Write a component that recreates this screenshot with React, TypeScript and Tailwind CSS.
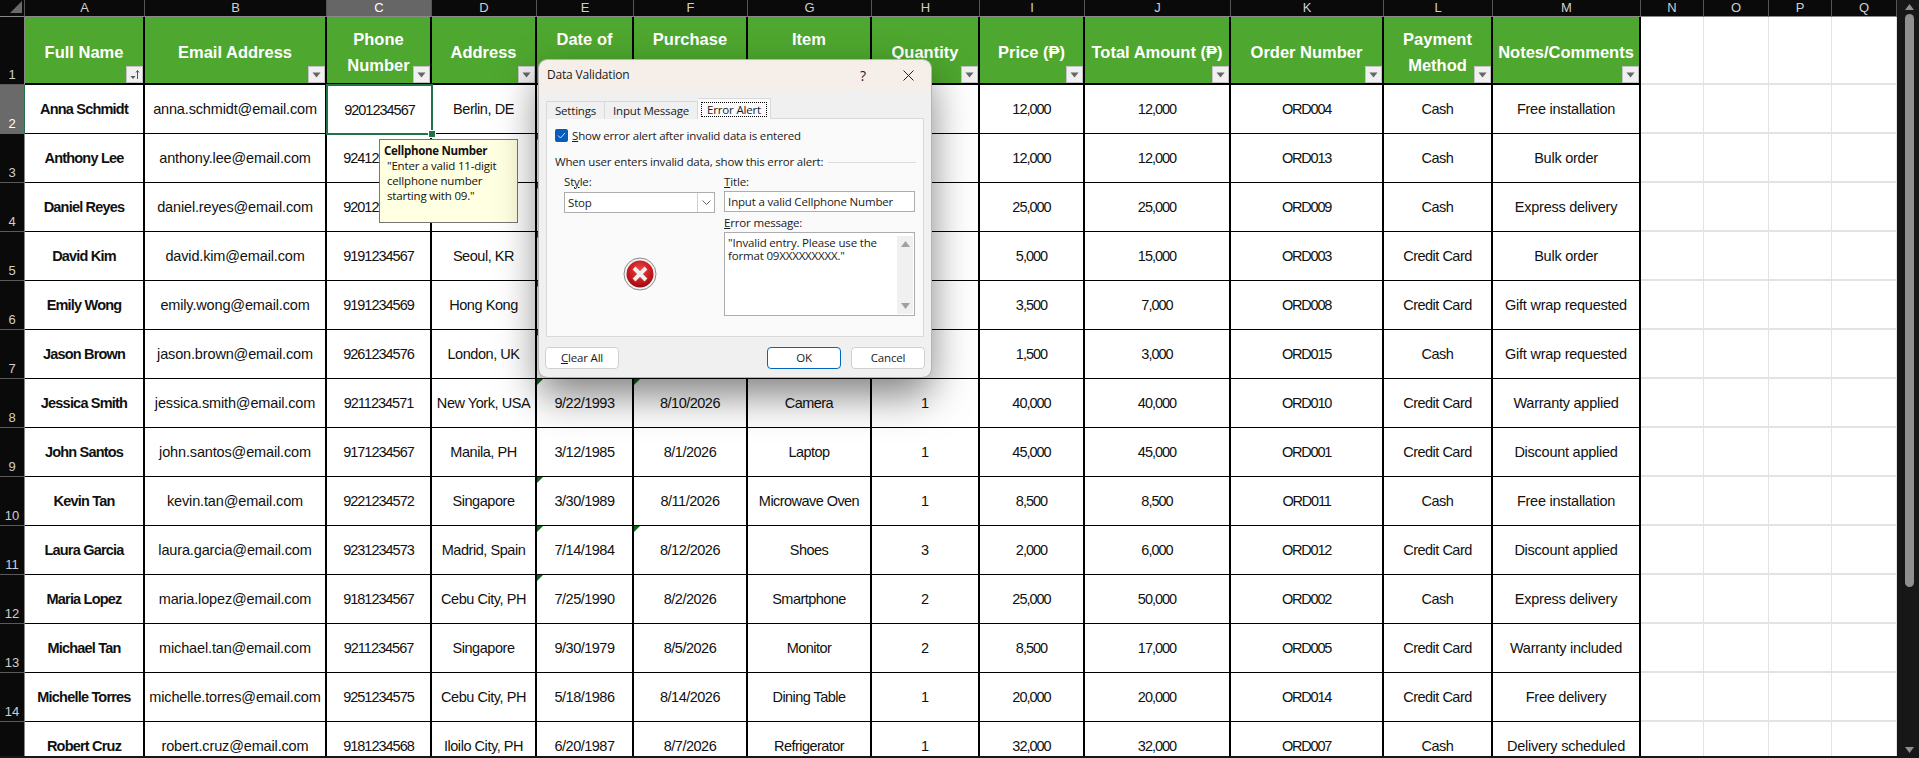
import React from 'react';

type Row = {
    num: number;
    name: string;
    email: string;
    phone: string;
    address: string;
    dob: string;
    purchase: string;
    item: string;
    qty: string;
    price: string;
    total: string;
    order: string;
    payment: string;
    notes: string;
    flagDob?: boolean;
    flagPurchase?: boolean;
};

const rows: Row[] = [
    {num: 2, name: 'Anna Schmidt', email: 'anna.schmidt@email.com', phone: '9201234567', address: 'Berlin, DE', dob: '', purchase: '', item: '', qty: '', price: '12,000', total: '12,000', order: 'ORD004', payment: 'Cash', notes: 'Free installation'},
    {num: 3, name: 'Anthony Lee', email: 'anthony.lee@email.com', phone: '9241234567', address: '', dob: '', purchase: '', item: '', qty: '', price: '12,000', total: '12,000', order: 'ORD013', payment: 'Cash', notes: 'Bulk order', flagDob: true},
    {num: 4, name: 'Daniel Reyes', email: 'daniel.reyes@email.com', phone: '9201234567', address: '', dob: '', purchase: '', item: '', qty: '', price: '25,000', total: '25,000', order: 'ORD009', payment: 'Cash', notes: 'Express delivery', flagDob: true},
    {num: 5, name: 'David Kim', email: 'david.kim@email.com', phone: '9191234567', address: 'Seoul, KR', dob: '', purchase: '', item: '', qty: '', price: '5,000', total: '15,000', order: 'ORD003', payment: 'Credit Card', notes: 'Bulk order', flagDob: true},
    {num: 6, name: 'Emily Wong', email: 'emily.wong@email.com', phone: '9191234569', address: 'Hong Kong', dob: '', purchase: '', item: '', qty: '', price: '3,500', total: '7,000', order: 'ORD008', payment: 'Credit Card', notes: 'Gift wrap requested', flagDob: true},
    {num: 7, name: 'Jason Brown', email: 'jason.brown@email.com', phone: '9261234576', address: 'London, UK', dob: '', purchase: '', item: '', qty: '', price: '1,500', total: '3,000', order: 'ORD015', payment: 'Cash', notes: 'Gift wrap requested', flagDob: true},
    {num: 8, name: 'Jessica Smith', email: 'jessica.smith@email.com', phone: '9211234571', address: 'New York, USA', dob: '9/22/1993', purchase: '8/10/2026', item: 'Camera', qty: '1', price: '40,000', total: '40,000', order: 'ORD010', payment: 'Credit Card', notes: 'Warranty applied', flagDob: true, flagPurchase: true},
    {num: 9, name: 'John Santos', email: 'john.santos@email.com', phone: '9171234567', address: 'Manila, PH', dob: '3/12/1985', purchase: '8/1/2026', item: 'Laptop', qty: '1', price: '45,000', total: '45,000', order: 'ORD001', payment: 'Credit Card', notes: 'Discount applied'},
    {num: 10, name: 'Kevin Tan', email: 'kevin.tan@email.com', phone: '9221234572', address: 'Singapore', dob: '3/30/1989', purchase: '8/11/2026', item: 'Microwave Oven', qty: '1', price: '8,500', total: '8,500', order: 'ORD011', payment: 'Cash', notes: 'Free installation', flagDob: true},
    {num: 11, name: 'Laura Garcia', email: 'laura.garcia@email.com', phone: '9231234573', address: 'Madrid, Spain', dob: '7/14/1984', purchase: '8/12/2026', item: 'Shoes', qty: '3', price: '2,000', total: '6,000', order: 'ORD012', payment: 'Credit Card', notes: 'Discount applied', flagDob: true, flagPurchase: true},
    {num: 12, name: 'Maria Lopez', email: 'maria.lopez@email.com', phone: '9181234567', address: 'Cebu City, PH', dob: '7/25/1990', purchase: '8/2/2026', item: 'Smartphone', qty: '2', price: '25,000', total: '50,000', order: 'ORD002', payment: 'Cash', notes: 'Express delivery', flagDob: true},
    {num: 13, name: 'Michael Tan', email: 'michael.tan@email.com', phone: '9211234567', address: 'Singapore', dob: '9/30/1979', purchase: '8/5/2026', item: 'Monitor', qty: '2', price: '8,500', total: '17,000', order: 'ORD005', payment: 'Credit Card', notes: 'Warranty included'},
    {num: 14, name: 'Michelle Torres', email: 'michelle.torres@email.com', phone: '9251234575', address: 'Cebu City, PH', dob: '5/18/1986', purchase: '8/14/2026', item: 'Dining Table', qty: '1', price: '20,000', total: '20,000', order: 'ORD014', payment: 'Credit Card', notes: 'Free delivery'},
    {num: 15, name: 'Robert Cruz', email: 'robert.cruz@email.com', phone: '9181234568', address: 'Iloilo City, PH', dob: '6/20/1987', purchase: '8/7/2026', item: 'Refrigerator', qty: '1', price: '32,000', total: '32,000', order: 'ORD007', payment: 'Cash', notes: 'Delivery scheduled'},
];

const letters = ['A', 'B', 'C', 'D', 'E', 'F', 'G', 'H', 'I', 'J', 'K', 'L', 'M', 'N', 'O', 'P', 'Q'];

const headers = [
    ['Full Name'],
    ['Email Address'],
    ['Phone', 'Number'],
    ['Address'],
    ['Date of', 'Birth'],
    ['Purchase', 'Date'],
    ['Item', 'Purchased'],
    ['Quantity'],
    ['Price (₱)'],
    ['Total Amount (₱)'],
    ['Order Number'],
    ['Payment', 'Method'],
    ['Notes/Comments'],
];

const gridCols = 'grid grid-cols-[25px_120px_182px_105px_105px_97px_114px_124px_108px_105px_146px_153px_109px_148px_63px_65px_63px_65px]';

const FilterButton = ({sorted}: {sorted?: boolean}) => (
    <div className="absolute right-0 bottom-0 w-[17px] h-[17px] bg-[#f0f0f0] border border-[#c4c4c4] flex items-center justify-center">
        {sorted ? (
            <svg width="15" height="15" viewBox="0 0 15 15">
                <path d="M3.500 9h5L6 12z" fill="#555"/>
                <path d="M10.500 12V3.500M9 5.500l1.500-2 1.500 2" stroke="#555" fill="none"/>
            </svg>
        ) : (
            <svg width="9" height="6" viewBox="0 0 9 6">
                <path d="M0.500 0.500h8L4.500 5.500z" fill="#666"/>
            </svg>
        )}
    </div>
);

const Cell = ({text, fit, flag}: {text: string; fit?: string; flag?: boolean}) => (
    <div className={`relative h-[49px] flex items-center justify-center pt-[2px] bg-white border-r-2 border-b border-black text-[14.5px] whitespace-nowrap overflow-hidden text-[#111] ${fit ?? ''}`}>
        {flag && <div className="absolute left-0 top-0 w-0 h-0 border-t-[6px] border-r-[6px] border-t-[#0a6b14] border-r-transparent"/>}
        {text}
    </div>
);

const EmptyCell = () => <div className="h-[49px] bg-white border-r border-b-2 border-[#e3e3e3]"/>;

const RowHeader = ({num, active, hideLabel}: {num: number; active?: boolean; hideLabel?: boolean}) => (
    <div className={`h-[49px] flex items-end justify-center pb-[1px] text-[13px] leading-[16px] border-b ${active ? 'bg-[#6a6a6a] text-white border-[#6a6a6a] border-r border-r-[#217346]' : 'bg-[#0a0a0a] text-[#cfcfcf] border-[#5a5a5a] border-r border-r-[#888]'}`}>
        {!hideLabel && num}
    </div>
);

const Sheet = () => (
    <div className={`${gridCols} content-start overflow-hidden h-[756px] bg-white`}>
        {/* column letters */}
        <div className="h-[17px] bg-[#0a0a0a] border-b border-r border-b-[#888] border-r-[#555] relative overflow-hidden">
            <div className="absolute right-[2px] bottom-[3px] w-0 h-0 border-b-[12px] border-l-[12px] border-b-[#6a6a6a] border-l-transparent"/>
        </div>
        {letters.map(letter => (
            <div key={letter} className={`h-[17px] flex items-center justify-center text-[13px] border-r border-b border-r-[#555] border-b-[#888] ${letter === 'C' ? 'bg-[#666] text-white' : 'bg-[#0a0a0a] text-[#cfcfcf]'}`}>
                {letter}
            </div>
        ))}

        {/* header row */}
        <div className="h-[68px] bg-[#0a0a0a] flex items-end justify-center text-[13px] leading-[16px] pb-[1px] text-[#cfcfcf] border-b border-r border-b-[#5a5a5a] border-r-[#888]">1</div>
        {headers.map((lines, i) => (
            <div key={i} className="relative h-[68px] bg-[#4ea72e] border-r-2 border-b-2 border-black flex flex-col items-center justify-center pt-[3px] text-white font-bold text-[16.5px] leading-[26px] whitespace-nowrap">
                {lines.map(line => <span key={line}>{line}</span>)}
                <FilterButton sorted={i === 0}/>
            </div>
        ))}
        <div className="h-[68px] bg-white border-r border-b-2 border-[#e3e3e3]"/>
        <div className="h-[68px] bg-white border-r border-b-2 border-[#e3e3e3]"/>
        <div className="h-[68px] bg-white border-r border-b-2 border-[#e3e3e3]"/>
        <div className="h-[68px] bg-white border-r border-b-2 border-[#e3e3e3]"/>

        {rows.map((row, rowIndex) => (
            <React.Fragment key={row.num}>
                <RowHeader num={row.num} active={rowIndex === 0} hideLabel={row.num === 15}/>
                <Cell text={row.name} fit="font-bold tracking-[-0.8px]"/>
                <Cell text={row.email} fit="tracking-[-0.15px]"/>
                {rowIndex === 0 ? (
                    <div className="relative z-10 h-[49px] flex items-center justify-center pt-[2px] bg-white text-[14.5px] tracking-[-1px] text-[#111] outline-2 -outline-offset-1 outline-[#217346]">
                        {row.phone}
                        <div className="absolute right-[-3px] bottom-[-3px] w-[6px] h-[6px] bg-[#217346] outline outline-white"/>
                    </div>
                ) : (
                    <Cell text={row.phone} fit="tracking-[-1px]"/>
                )}
                <Cell text={row.address} fit="tracking-[-0.45px]"/>
                <Cell text={row.dob} fit="tracking-[-0.5px]" flag={row.flagDob}/>
                <Cell text={row.purchase} fit="tracking-[-0.5px]" flag={row.flagPurchase}/>
                <Cell text={row.item} fit="tracking-[-0.55px]"/>
                <Cell text={row.qty}/>
                <Cell text={row.price} fit="tracking-[-1px]"/>
                <Cell text={row.total} fit="tracking-[-1px]"/>
                <Cell text={row.order} fit="tracking-[-1.2px]"/>
                <Cell text={row.payment} fit="tracking-[-0.5px]"/>
                <Cell text={row.notes} fit="tracking-[-0.25px]"/>
                <EmptyCell/>
                <EmptyCell/>
                <EmptyCell/>
                <EmptyCell/>
            </React.Fragment>
        ))}
    </div>
);

const ScrollBar = () => (
    <div className="relative flex-1 bg-[#171717] flex flex-col items-center pt-[14px] pl-[2px]">
        <svg className="absolute top-[4px]" width="9" height="6" viewBox="0 0 9 6">
            <path d="M4.500 0L9 6H0z" fill="#8f8f8f"/>
        </svg>
        <div className="w-[9px] h-[573px] rounded-full bg-[#8f8f8f]"/>
        <svg className="absolute bottom-[5px]" width="9" height="6" viewBox="0 0 9 6">
            <path d="M0 0h9L4.500 6z" fill="#8f8f8f"/>
        </svg>
    </div>
);

const InputTooltip = () => (
    <div className="absolute left-[379px] top-[139px] w-[139px] h-[84px] bg-[#ffffe1] border border-[#767676] px-[4px] pt-[3px] font-['Open_Sans',sans-serif] text-[11.5px] tracking-[-0.18px] leading-[15px] text-[#111] z-20">
        <div className="font-bold tracking-[-0.3px]">Cellphone Number</div>
        <div className="pl-[3px]">"Enter a valid 11-digit</div>
        <div className="pl-[3px]">cellphone number</div>
        <div className="pl-[3px]">starting with 09."</div>
    </div>
);

const ErrorIcon = () => (
    <svg width="34" height="34" viewBox="0 0 34 34">
        <defs>
            <radialGradient id="stop-red" cx="50%" cy="35%" r="65%">
                <stop offset="0%" stopColor="#e8474a"/>
                <stop offset="70%" stopColor="#c5161c"/>
                <stop offset="100%" stopColor="#8e0d12"/>
            </radialGradient>
        </defs>
        <circle cx="17" cy="17" r="16" fill="#f4f4f4" stroke="#8a8a8a"/>
        <circle cx="17" cy="17" r="13.500" fill="url(#stop-red)"/>
        <path d="M11 11l12 12M23 11L11 23" stroke="#f2eeee" strokeWidth="4"/>
    </svg>
);

const DialogButton = ({label, primary}: {label: React.ReactNode; primary?: boolean}) => (
    <button className={`w-[74px] h-[22px] rounded-[4px] bg-white text-[11.500px] leading-none text-[#1a1a1a] border ${primary ? 'border-[#0067c0]' : 'border-[#d0d0d0]'}`}>
        {label}
    </button>
);

const DataValidationDialog = () => (
    <div className="absolute left-[539px] top-[60px] w-[392px] h-[317px] flex flex-col rounded-[8px] overflow-hidden bg-[#f0f0f0] z-30 font-['Open_Sans',sans-serif] text-[11.5px] tracking-[-0.18px] text-[#1a1a1a] outline outline-[#b5b5b5] shadow-[0_18px_40px_rgba(0,0,0,0.5)]">
        <div className="h-[30px] shrink-0 bg-[#f6efe9] flex items-center pl-[8px]">
            <span className="flex-1 text-[12px]">Data Validation</span>
            <span className="w-[16px] text-center text-[14px] mr-[32px]">?</span>
            <svg className="mr-[17px]" width="11" height="11" viewBox="0 0 11 11">
                <path d="M0.500 0.500l10 10M10.500 0.500l-10 10" stroke="#222" fill="none"/>
            </svg>
        </div>
        <div className="flex-1 flex flex-col px-[7px] pt-[8px]">
            <div className="flex items-end h-[20px] relative top-[1px] z-10">
                <div className="w-[59px] h-[18px] flex items-center justify-center bg-[#f0f0f0] border border-b-0 border-[#d9d9d9]">Settings</div>
                <div className="w-[93px] h-[18px] flex items-center justify-center bg-[#f0f0f0] border border-b-0 border-l-0 border-[#d9d9d9]">Input Message</div>
                <div className="w-[73px] h-[21px] flex items-center justify-center bg-[#fafafa] border border-b-0 border-l-0 border-[#d9d9d9]">
                    <span className="border border-dotted border-black px-[5px] leading-[13px]">Error Alert</span>
                </div>
            </div>
            <div className="h-[219px] w-[378px] bg-[#fafafa] border border-[#d9d9d9] px-[8px] pt-[10px] flex flex-col">
                <div className="flex items-center gap-[4px] h-[13px]">
                    <div className="w-[13px] h-[13px] rounded-[2px] bg-[#0a5cba] flex items-center justify-center">
                        <svg width="9" height="9" viewBox="0 0 9 9"><path d="M1 4.500l2.500 2.500L8 2" stroke="#cfe2f7" fill="none"/></svg>
                    </div>
                    <span><u>S</u>how error alert after invalid data is entered</span>
                </div>
                <div className="flex items-center gap-[5px] mt-[13px] h-[14px]">
                    <span>When user enters invalid data, show this error alert:</span>
                    <div className="flex-1 h-px bg-[#dcdcdc] mr-[-1px]"/>
                </div>
                <div className="flex mt-[5px] pl-[9px]">
                    <div className="w-[152px] flex flex-col">
                        <span className="h-[18px] leading-[16px]">St<u>y</u>le:</span>
                        <div className="h-[21px] bg-white border border-[#adadad] flex items-center justify-between pl-[3px]">
                            <span>Stop</span>
                            <div className="w-[17px] h-full border-l border-[#d0d0d0] flex items-center justify-center">
                                <svg width="9" height="6" viewBox="0 0 9 6"><path d="M0.500 0.500L4.500 4.500 8.500 0.500" stroke="#666" fill="none"/></svg>
                            </div>
                        </div>
                        <div className="flex justify-center mt-[44px]"><ErrorIcon/></div>
                    </div>
                    <div className="w-[192px] ml-[9px] flex flex-col">
                        <span className="h-[17px] leading-[16px]"><u>T</u>itle:</span>
                        <div className="h-[21px] bg-white border border-[#adadad] flex items-center pl-[3px]">Input a valid Cellphone Number</div>
                        <span className="h-[20px] pt-[3px] leading-[16px]"><u>E</u>rror message:</span>
                        <div className="h-[84px] bg-white border border-[#adadad] flex justify-between pl-[3px] pt-[2px] leading-[13px]">
                            <div className="pt-[1px]">"Invalid entry. Please use the<br/>format 09XXXXXXXXX."</div>
                            <div className="w-[16px] h-[78px] mt-[1px] mr-[1px] bg-[#f0f0f0] flex flex-col items-center justify-between py-[5px] shrink-0">
                                <svg width="9" height="6" viewBox="0 0 9 6"><path d="M4.500 0L9 6H0z" fill="#a0a0a0"/></svg>
                                <svg width="9" height="6" viewBox="0 0 9 6"><path d="M0 0h9L4.500 6z" fill="#a0a0a0"/></svg>
                            </div>
                        </div>
                    </div>
                </div>
            </div>
            <div className="flex items-center mt-[10px] -mx-[1px]">
                <DialogButton label={<><u>C</u>lear All</>}/>
                <div className="flex-1"/>
                <DialogButton label="OK" primary/>
                <div className="w-[10px]"/>
                <DialogButton label="Cancel"/>
            </div>
        </div>
    </div>
);

export default function App() {
    return (
        <div className="relative w-[1919px] h-[758px] overflow-hidden bg-[#171717] flex font-['Liberation_Sans',sans-serif]">
            <div className="w-[1897px] h-[758px]">
                <Sheet/>
            </div>
            <ScrollBar/>
            <InputTooltip/>
            <DataValidationDialog/>
        </div>
    );
}
